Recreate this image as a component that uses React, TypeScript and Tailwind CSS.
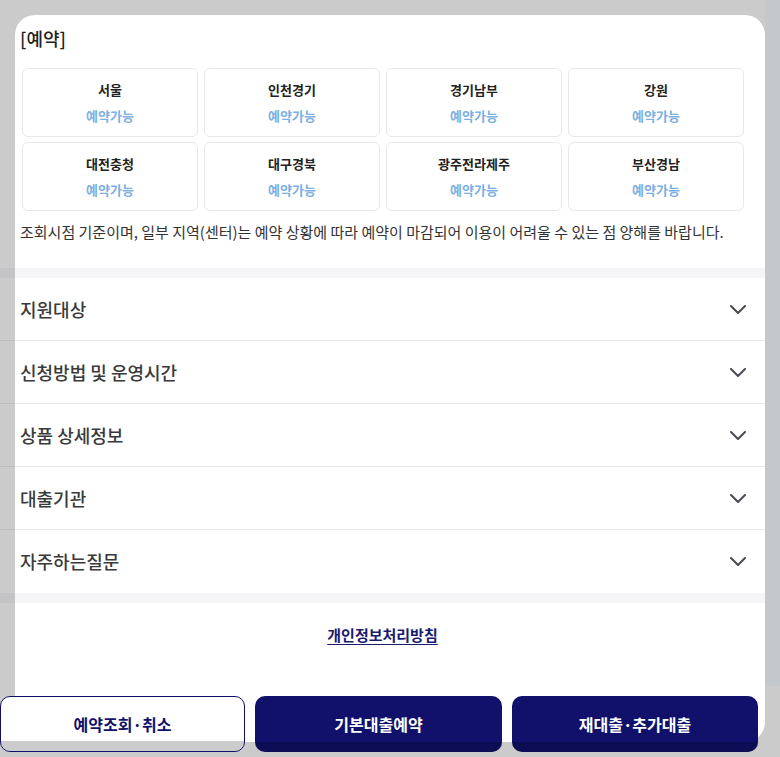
const regions = [
  '서울',
  '인천경기',
  '경기남부',
  '강원',
  '대전충청',
  '대구경북',
  '광주전라제주',
  '부산경남',
];

const sections = [
  '지원대상',
  '신청방법 및 운영시간',
  '상품 상세정보',
  '대출기관',
  '자주하는질문',
];

// dimmed page peeking out at the left edge
function DimStrip() {
  return (
    <div className="flex w-[15px] shrink-0 flex-col">
      <div className="h-[268px]" />
      <div className="h-[10px] bg-[#c4c4c6]" />
      {sections.map((s, i) => (
        <div
          key={s}
          className={`h-[63px] ${i < sections.length - 1 ? 'border-b border-[#bdbdbd]' : ''}`}
        />
      ))}
      <div className="h-[10px] bg-[#c4c4c6]" />
    </div>
  );
}

function Chevron() {
  return (
    <svg width="16" height="9" viewBox="0 0 16 9" fill="none">
      <path
        d="M1 1l7 7 7-7"
        stroke="#4a4a55"
        strokeWidth="2"
        strokeLinecap="round"
        strokeLinejoin="round"
      />
    </svg>
  );
}

export default function App() {
  return (
    <div
      className="relative flex h-[757px] w-[780px] overflow-hidden bg-[#cbcbcb]"
      style={{ fontFamily: '"Noto Sans CJK KR", "Noto Sans", sans-serif' }}
    >
      <DimStrip />

      <div className="mt-[15px] flex h-[727px] w-[750px] shrink-0 flex-col overflow-hidden rounded-[20px] bg-white">
        <h2 className="pl-[5px] pt-[10px] text-[18px] font-medium leading-[26px] text-[#222]">
          [예약]
        </h2>

        <div className="ml-[7px] mt-[17px] grid w-[722px] grid-cols-4 gap-x-[6px] gap-y-[5px]">
          {regions.map((r) => (
            <div
              key={r}
              className="flex h-[69px] flex-col items-center justify-center gap-[6px] rounded-[6px] border border-[#e8e8e8]"
            >
              <span className="text-[13px] font-bold leading-[20px] text-[#222]">
                {r}
              </span>
              <span className="text-[13px] font-bold leading-[20px] text-[#7cb0e3]">
                예약가능
              </span>
            </div>
          ))}
        </div>

        <p className="mt-[11px] pl-[5px] text-[15px] leading-[20px] text-[#333]">
          조회시점 기준이며, 일부 지역(센터)는 예약 상황에 따라 예약이 마감되어 이용이
          어려울 수 있는 점 양해를 바랍니다.
        </p>

        <div className="mt-[26px] h-[10px] shrink-0 bg-[#f5f5f7]" />

        {sections.map((s, i) => (
          <div
            key={s}
            className={`flex h-[63px] shrink-0 items-center justify-between pl-[5px] pr-[19px] ${
              i < sections.length - 1 ? 'border-b border-[#e8e8e8]' : ''
            }`}
          >
            <span className="text-[18px] font-medium text-[#3a3a3a]">{s}</span>
            <Chevron />
          </div>
        ))}

        <div className="h-[10px] shrink-0 bg-[#f5f5f7]" />

        <a className="mr-[15px] mt-[22px] self-center text-[15px] font-bold leading-[20px] text-[#1b1b70] underline underline-offset-[3px]">
          개인정보처리방침
        </a>
      </div>

      <div className="h-[686px] w-[15px] shrink-0 bg-[#c5c8cb]" />

      {/* fixed bottom actions */}
      <div className="absolute left-0 top-[696px] flex w-[758px] gap-[10px]">
        <button className="relative h-[56px] w-[245px] overflow-hidden rounded-[10px] border border-[#10106b] bg-white text-[16px] font-bold text-[#10106b]">
          예약조회·취소
          <span className="absolute inset-x-0 bottom-0 h-[10px] bg-black/20" />
        </button>
        <button className="relative h-[56px] w-[247px] overflow-hidden rounded-[10px] bg-[#11116b] text-[16px] font-bold text-white">
          기본대출예약
          <span className="absolute inset-x-0 bottom-0 h-[10px] bg-black/20" />
        </button>
        <button className="relative h-[56px] flex-1 overflow-hidden rounded-[10px] bg-[#11116b] text-[16px] font-bold text-white">
          재대출·추가대출
          <span className="absolute inset-x-0 bottom-0 h-[10px] bg-black/20" />
        </button>
      </div>
    </div>
  );
}
